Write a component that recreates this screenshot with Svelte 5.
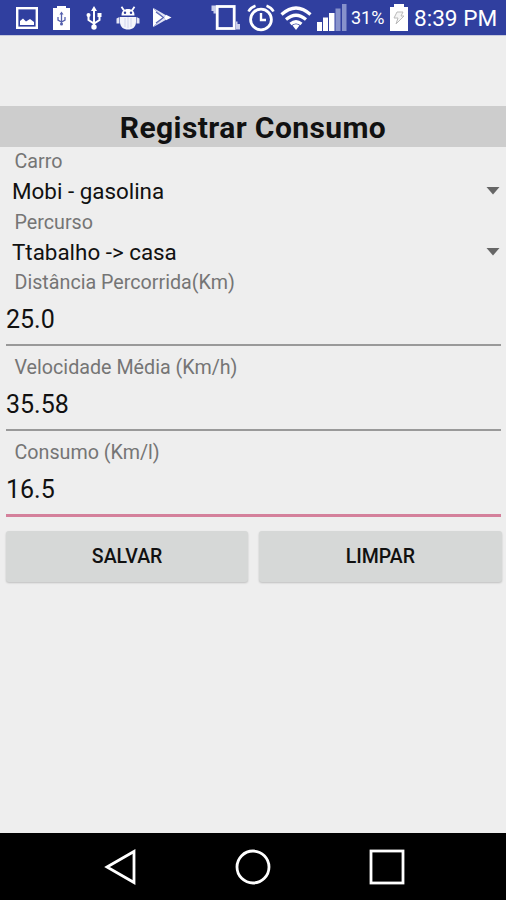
<script>
  let cars = ['Mobi - gasolina']
  let routes = ['Ttabalho -> casa']

  let spinners = $state([
    { label: 'Carro', value: cars[0] },
    { label: 'Percurso', value: routes[0] }
  ])

  let fields = $state([
    { label: 'Distância Percorrida(Km)', value: '25.0' },
    { label: 'Velocidade Média (Km/h)', value: '35.58' },
    { label: 'Consumo (Km/l)', value: '16.5', focused: true }
  ])

  function clear() {
    fields.forEach((field) => (field.value = ''))
  }
</script>

<div class="screen">
  <header class="status">
    <div class="notifications">
      <svg width="22" height="22" viewBox="0 0 22 22">
        <rect x="1.2" y="1.2" width="19.6" height="19.6" fill="none" stroke="#fff" stroke-width="2.4" />
        <path d="M4 18v-4l3-2.500 3 3 4-2.500 4 3v3z" fill="#fff" />
      </svg>
      <svg width="17" height="24" viewBox="0 0 17 24">
        <path d="M0 2h4V0h9v2h4v22H0z" fill="#fff" />
        <path d="M8.5 7v12M5 11v3l3.500 2L12 14v-3" fill="none" stroke="#5560ad" stroke-width="1.300" />
        <path d="M6.500 8.500l2-3 2 3z" fill="#5560ad" />
        <circle cx="8.500" cy="18" r="1.500" fill="#5560ad" />
      </svg>
      <svg class="usb" width="16" height="24" viewBox="0 0 16 24">
        <path d="M8 3v18M2.500 9v5l5.500 3.500 5.500-3.500V9" fill="none" stroke="#fff" stroke-width="2" />
        <path d="M5 5l3-5 3 5zM11.500 7h4v4h-4z" fill="#fff" />
        <circle cx="2.500" cy="9" r="2" fill="#fff" />
        <circle cx="8" cy="21" r="2.700" fill="#fff" />
      </svg>
      <svg class="android" width="24" height="24" viewBox="0 0 24 24">
        <path d="M5.500 9.500c0-4.500 2.500-6.500 6.500-6.500s6.500 2 6.500 6.500z" fill="#fff" />
        <path d="M8 4.500L5.500.8M16 4.500l2.500-3.700" stroke="#fff" stroke-width="1.800" />
        <path d="M4 11h16v5c0 5-3.500 7.500-8 7.500S4 21 4 16z" fill="#f4f5fb" />
        <path d="M3.500 11L.5 12.500v5h3zM20.500 11l3 1.500v5h-3z" fill="#e4e6f5" />
        <path d="M9 12v9M12 11v11M15 12v9" stroke="#c9cdea" stroke-width=".8" />
        <circle cx="9" cy="6.800" r="1.200" fill="#303f9f" />
        <circle cx="15" cy="6.800" r="1.200" fill="#303f9f" />
      </svg>
      <svg class="play" width="21" height="22" viewBox="0 0 21 22">
        <path d="M1 1v19l10-9.500z" fill="#fff" />
        <path d="M1 .8l13 7.400-2.500 2.300zM1 20.200l13-7.400-2.500-2.300z" fill="#dfe2f5" />
        <path d="M14 7.800l5.500 2.700-5.500 2.700-2.200-2.600z" fill="#fff" />
        <path d="M4 5l7.500 5.500L4 16" fill="none" stroke="#5966b5" stroke-width="1.200" />
      </svg>
    </div>
    <div class="system">
      <svg width="30" height="27" viewBox="0 0 30 27">
        <rect x="6.200" y="2.500" width="17" height="22" fill="none" stroke="#fff" stroke-width="2.800" />
        <path d="M.5 1.500H5v8H2.500V7h-2zM25 17.500h1.500V20H29v5.500h-4z" fill="#ccd0ec" />
      </svg>
      <svg class="alarm" width="28" height="28" viewBox="0 0 28 28">
        <circle cx="14" cy="15.500" r="10.400" fill="none" stroke="#fff" stroke-width="2.800" />
        <path d="M14 9v7h5" fill="none" stroke="#fff" stroke-width="2.400" />
        <path d="M1.500 7.500Q3.500 3.500 8.500 1.700M26.500 7.500Q24.500 3.500 19.500 1.700" fill="none" stroke="#fff" stroke-width="2.500" />
      </svg>
      <svg class="wifi" width="32" height="26" viewBox="0 0 32 26">
        <path d="M1.500 9.500Q16-3.500 30.500 9.500M6 14.500q10-8.500 20 0M10.500 19q5.500-4.500 11 0" fill="none" stroke="#fff" stroke-width="3.200" />
        <path d="M12.500 20.500q3.500-2.500 7 0L16 25z" fill="#fff" />
      </svg>
      <svg class="signal" width="30" height="27" viewBox="0 0 30 27">
        <path d="M0 18h5v9H0zM6 13.500h5V27H6zM12 9h5.500v18H12z" fill="#fff" />
        <path d="M18.500 4.500h5V27h-5zM25 0h4.500v27H25z" fill="#8792cc" />
      </svg>
      <span class="percent">31%</span>
      <svg class="battery" width="18" height="27" viewBox="0 0 18 27">
        <path d="M0 3h4V0h10v3h4v24H0z" fill="#fff" />
        <path d="M7 8h6l-2 4h3l-8 8 2-6H4z" fill="#f5f5f5" stroke="#bbb" />
      </svg>
      <span class="clock">8:39 PM</span>
    </div>
  </header>

  <main>
    <h1>Registrar Consumo</h1>

    {#each spinners as spinner}
      <div class="label">{spinner.label}</div>
      <div class="spinner">
        <span>{spinner.value}</span>
        <svg width="14" height="8" viewBox="0 0 14 8">
          <path d="M.5 0h13L7 7.500z" fill="#666" />
        </svg>
      </div>
    {/each}

    {#each fields as field}
      <div class="label">{field.label}</div>
      <div class="field">
        <input class:focused={field.focused} bind:value={field.value} aria-label={field.label} />
      </div>
    {/each}

    <div class="actions">
      <button>SALVAR</button>
      <button onclick={clear}>LIMPAR</button>
    </div>
  </main>

  <nav>
    <svg width="34" height="38" viewBox="0 0 34 38">
      <path d="M3 19L30 3.500v31z" fill="none" stroke="#fff" stroke-width="2.800" />
    </svg>
    <svg width="38" height="38" viewBox="0 0 38 38">
      <circle cx="19" cy="19" r="16" fill="none" stroke="#fff" stroke-width="2.800" />
    </svg>
    <svg width="38" height="38" viewBox="0 0 38 38">
      <rect x="3" y="3" width="32" height="32" fill="none" stroke="#fff" stroke-width="2.800" />
    </svg>
  </nav>
</div>

<style>
  :global(body) {
    margin: 0;
  }

  .screen {
    width: 506px;
    height: 900px;
    display: flex;
    flex-direction: column;
    background: #eee;
    font-family: Roboto, sans-serif;
    color: #111;
    overflow: hidden;
  }

  svg {
    display: block;
    flex: none;
  }

  .status {
    height: 35px;
    flex: none;
    display: flex;
    justify-content: space-between;
    padding: 0 9px 0 16px;
    background: #303f9f;
    color: #fff;
    border-bottom: 1px solid #c5c8dc;
  }

  .notifications,
  .system {
    display: flex;
    align-items: center;
  }

  .notifications {
    gap: 15px;
  }

  .usb {
    margin-left: 1px;
  }

  .android {
    margin-left: -1px;
  }

  .play {
    margin-left: -3px;
  }

  .alarm {
    margin-left: 6px;
  }

  .wifi,
  .signal {
    margin-left: 5px;
  }

  .percent {
    width: 36px;
    margin-left: 4px;
    font-size: 18px;
    line-height: 36px;
    white-space: nowrap;
  }

  .battery {
    margin-left: 3px;
  }

  .clock {
    width: 83px;
    margin-left: 6px;
    font-size: 22.6px;
    line-height: 38px;
    padding-top: 2px;
    white-space: nowrap;
  }

  main {
    flex: 1;
    padding-top: 70px;
  }

  h1 {
    margin: 0;
    height: 41px;
    line-height: 44px;
    font-size: 30px;
    font-weight: 700;
    letter-spacing: 0.4px;
    text-align: center;
    background: #cdcdcd;
  }

  .label {
    height: 28px;
    line-height: 29px;
    padding-left: 14.5px;
    font-size: 19.7px;
    color: #757575;
  }

  .spinner {
    height: 32.7px;
    display: flex;
    align-items: center;
    justify-content: space-between;
    padding: 0 6px 0 12px;
    font-size: 22.4px;
  }

  .field {
    height: 57px;
    padding: 0 5px 0 6px;
    box-sizing: border-box;
  }

  input {
    display: block;
    width: 100%;
    height: 50px;
    box-sizing: border-box;
    border: none;
    border-bottom: 2px solid #999;
    border-radius: 0;
    background: none;
    padding: 0 0 2px;
    font: 25px Roboto, sans-serif;
    color: #111;
    outline: none;
  }

  input.focused {
    height: 51px;
    border-bottom: 3px solid #d4809b;
  }

  .actions {
    display: flex;
    gap: 11px;
    padding: 8px 4.5px 0 6px;
  }

  button {
    flex: 1;
    height: 51px;
    border: none;
    border-radius: 3px;
    background: #d6d8d7;
    box-shadow: 0 1px 2px rgba(0, 0, 0, 0.2);
    font: 500 19.5px Roboto, sans-serif;
    color: #111;
    padding: 0;
  }

  nav {
    height: 67px;
    flex: none;
    display: flex;
    align-items: center;
    justify-content: center;
    gap: 96px;
    padding-left: 3px;
    background: #000;
  }
</style>
